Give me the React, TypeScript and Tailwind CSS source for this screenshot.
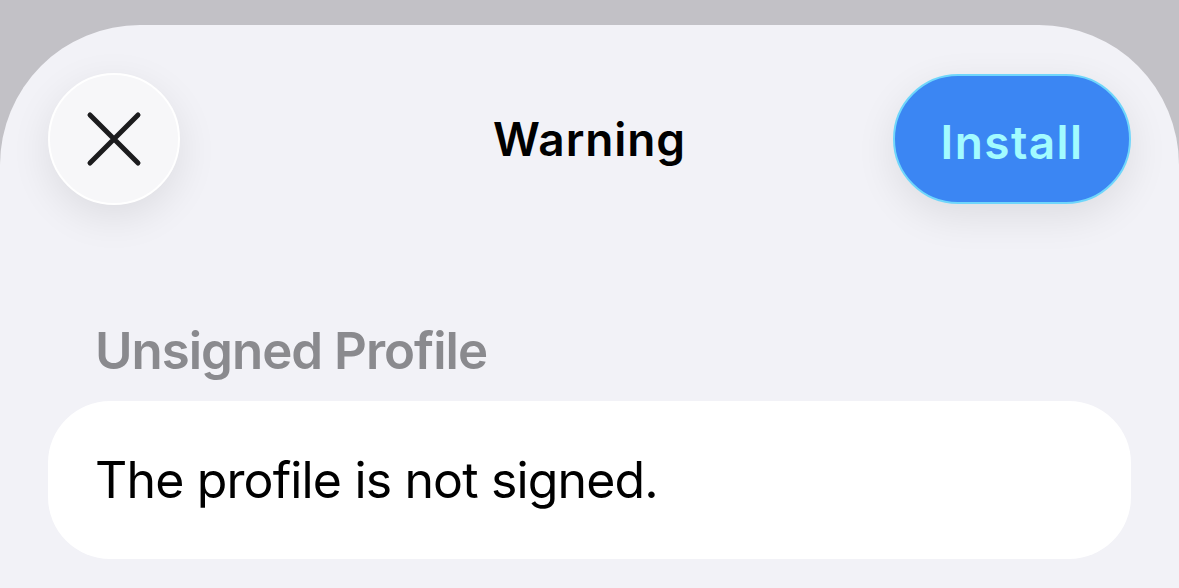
import React from "react";

export default function App() {
  return (
    <div
      className="w-full h-[588px] bg-[#c2c1c6] pt-[25px] overflow-hidden"
      style={{ fontFamily: "Inter, 'Noto Sans', sans-serif" }}
    >
      <div className="h-[600px] bg-[#f2f2f7] rounded-t-[140px] px-[48px]">
        <div className="pt-[48px] flex items-center">
          <div className="flex-1 flex">
            <button className="w-[132px] h-[132px] rounded-full bg-[#f7f7f9] border-2 border-white shadow-[0_12px_40px_rgba(0,0,0,0.09)] flex items-center justify-center">
              <svg width="56" height="56" viewBox="0 0 56 56" fill="none">
                <path
                  d="M4 4 L52 52 M52 4 L4 52"
                  stroke="#1c1c1e"
                  strokeWidth="5"
                  strokeLinecap="round"
                />
              </svg>
            </button>
          </div>
          <div className="text-[46px] font-semibold text-black leading-[60px] tracking-[0.9px]">
            Warning
          </div>
          <div className="flex-1 flex justify-end">
            <button className="w-[238px] h-[130px] pt-[5px] rounded-full bg-[#3b86f3] border-2 border-[#6fd6fb] shadow-[0_12px_40px_rgba(0,0,0,0.09)] flex items-center justify-center text-[46px] font-semibold text-[#a2fbff] leading-[60px] tracking-[1.4px]">
              Install
            </button>
          </div>
        </div>
        <div className="mt-[116px] ml-[47px] text-[51px] font-semibold text-[#8a8a8e] leading-[60px] tracking-[-1px]">
          Unsigned Profile
        </div>
        <div className="mt-[20px] h-[158px] bg-white rounded-[62px] flex items-center pl-[47px]">
          <span className="text-[50px] text-black leading-[60px] tracking-[-0.85px]">
            The profile is not signed.
          </span>
        </div>
      </div>
    </div>
  );
}
